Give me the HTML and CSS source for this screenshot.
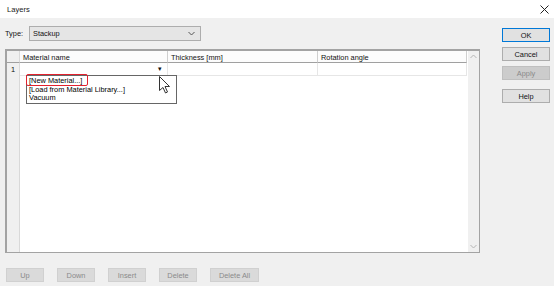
FILE: index.html
```html
<!DOCTYPE html>
<html lang="en">
<head>
  <meta charset="UTF-8">
  <title>Layers</title>
  <link rel="stylesheet" href="styles.css">
</head>
<body>
  <div class="window">
    <div class="titlebar">
      <span>Layers</span>
      <svg class="close" width="9" height="9" viewBox="0 0 9 9">
        <path d="M0.5 0.5 L8.5 8.5 M8.5 0.5 L0.5 8.5" stroke="#222" stroke-width="1"/>
      </svg>
    </div>

    <div class="content">
      <div class="main">
        <div class="type-row">
          <label>Type:</label>
          <div class="combo">
            <span>Stackup</span>
            <svg width="7" height="5" viewBox="0 0 7 5"><path d="M0.5 1 L3.5 4 L6.5 1" fill="none" stroke="#555" stroke-width="1"/></svg>
          </div>
        </div>

        <div class="grid">
          <div class="table">
            <div class="rowhead corner"></div>
            <div class="colhead">Material name</div>
            <div class="colhead">Thickness [mm]</div>
            <div class="colhead">Rotation angle</div>

            <div class="rowhead num">1</div>
            <div class="cell drop"><span class="arrow">&#9662;</span></div>
            <div class="cell"></div>
            <div class="cell"></div>

            <div class="rowhead filler"></div>
            <div class="blank"></div>
          </div>
          <div class="scrollbar">
            <svg width="7" height="5" viewBox="0 0 7 5"><path d="M0.5 4 L3.5 1 L6.5 4" fill="none" stroke="#b5b5b5" stroke-width="1"/></svg>
            <svg width="7" height="5" viewBox="0 0 7 5"><path d="M0.5 1 L3.5 4 L6.5 1" fill="none" stroke="#b5b5b5" stroke-width="1"/></svg>
          </div>

          <!-- open dropdown of the material cell -->
          <ul class="dropdown">
            <li>[New Material...]</li>
            <li>[Load from Material Library...]</li>
            <li>Vacuum</li>
          </ul>
          <div class="highlight"></div>

          <svg class="cursor" width="12" height="18" viewBox="0 0 12 18">
            <path d="M0.5 0.5 L0.5 14.5 L4 11.5 L6.5 17 L8.5 16 L6 10.5 L10.5 10.5 Z" fill="#fff" stroke="#333" stroke-width="1" stroke-linejoin="round"/>
          </svg>
        </div>

        <div class="actions">
          <button disabled>Up</button>
          <button disabled>Down</button>
          <button disabled>Insert</button>
          <button disabled>Delete</button>
          <button disabled class="wide">Delete All</button>
        </div>
      </div>

      <div class="side">
        <button class="default">OK</button>
        <button>Cancel</button>
        <button disabled>Apply</button>
        <button class="help">Help</button>
      </div>
    </div>
  </div>
</body>
</html>
```

FILE: styles.css
```css
* {
  box-sizing: border-box;
  margin: 0;
  padding: 0;
}

body {
  font-family: "Liberation Sans", Arial, sans-serif;
  font-size: 7.4px;
  color: #111;
  background: #f0f0f0;
  width: 554px;
  height: 286px;
  overflow: hidden;
}

.titlebar {
  height: 18px;
  background: #fff;
  display: flex;
  align-items: center;
  justify-content: space-between;
  padding: 0 5px 0 7px;
}

.titlebar span {
  font-size: 7.6px;
  color: #222;
}

.content {
  display: flex;
  padding: 8px 0 0 5px;
}

.main {
  width: 475px;
}

/* type selector */
.type-row {
  display: flex;
  align-items: center;
  height: 15px;
}

.type-row label {
  width: 24px;
}

.combo {
  width: 172px;
  height: 15px;
  background: #e5e5e5;
  border: 1px solid #adadad;
  display: flex;
  align-items: center;
  justify-content: space-between;
  padding: 0 5px 0 3px;
}

/* layer table */
.grid {
  position: relative;
  margin-top: 8px;
  height: 204px;
  border: 2px solid #a3a3a3;
  border-right-width: 1px;
  border-bottom-width: 1px;
  display: flex;
  background: #fff;
}

.table {
  flex: 1;
  display: grid;
  grid-template-columns: 13px 148px 150px 149px;
  grid-template-rows: 12px 13px 1fr;
}

.rowhead {
  background: #f0f0f0;
  border-right: 1px solid #d9d9d9;
}

.corner {
  border-bottom: 1px solid #a0a0a0;
}

.num {
  display: flex;
  align-items: center;
  padding-left: 4px;
}

.colhead {
  background: #fcfcfc;
  border-bottom: 1px solid #a0a0a0;
  border-right: 1px solid #cfcfcf;
  padding: 2px 0 0 3px;
}

.cell {
  border-bottom: 1px solid #e6e6e6;
  border-right: 1px solid #e6e6e6;
}

.drop {
  display: flex;
  justify-content: flex-end;
  align-items: center;
  padding-right: 5px;
}

.arrow {
  font-size: 7px;
  color: #111;
}

.blank {
  grid-column: 2 / 5;
}

.scrollbar {
  width: 11px;
  background: #f0f0f0;
  display: flex;
  flex-direction: column;
  justify-content: space-between;
  align-items: center;
  padding: 3px 0 3px;
}

.dropdown {
  position: absolute;
  left: 19px;
  top: 24px;
  width: 151px;
  height: 29px;
  list-style: none;
  background: #fff;
  border: 1px solid #666;
  padding: 1px 0 0 2px;
  color: #000;
}

.dropdown li {
  height: 8.6px;
  line-height: 8.6px;
}

.highlight {
  position: absolute;
  left: 19px;
  top: 23px;
  width: 62px;
  height: 12px;
  border: 1.5px solid #e3222e;
  border-radius: 2px;
}

.cursor {
  position: absolute;
  left: 152px;
  top: 25px;
}

/* buttons */
button {
  font-family: inherit;
  font-size: 7.4px;
  height: 14px;
  background: #e1e1e1;
  border: 1px solid #adadad;
  color: #111;
}

button:disabled {
  background: #cccccc;
  border-color: #bfbfbf;
  color: #8a8a8a;
}

.actions {
  display: flex;
  gap: 13px;
  margin-top: 15px;
  padding-left: 1px;
}

.actions button {
  width: 38px;
  background: #dadada;
  border-color: #d0d0d0;
}

.actions button.wide {
  width: 49px;
}

.side {
  margin-left: 22px;
  padding-top: 2px;
  display: flex;
  flex-direction: column;
  gap: 5px;
  width: 48px;
}

.side button.default {
  border-color: #0078d7;
}

.side button.help {
  margin-top: 4px;
}
```
